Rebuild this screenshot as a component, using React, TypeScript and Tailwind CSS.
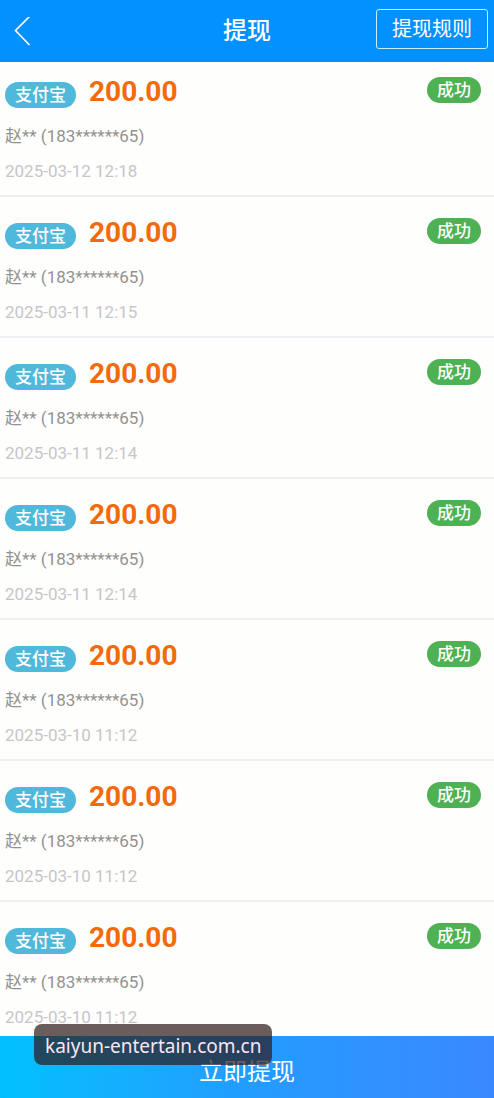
import { useState } from "react";

type Withdrawal = {
  id: number;
  channel: string;
  amount: string;
  account: string;
  time: string;
  status: string;
};

const account = "赵** (183******65)";

const withdrawals: Withdrawal[] = [
  "2025-03-12 12:18",
  "2025-03-11 12:15",
  "2025-03-11 12:14",
  "2025-03-11 12:14",
  "2025-03-10 11:12",
  "2025-03-10 11:12",
  "2025-03-10 11:12",
].map((time, id) => ({
  id,
  channel: "支付宝",
  amount: "200.00",
  account,
  time,
  status: "成功",
}));

function Header() {
  return (
    <header className="grid h-[62px] shrink-0 grid-cols-[1fr_auto_1fr] items-center bg-[#0391ff] px-1.5 pb-1 text-white">
      <button type="button" aria-label="返回" className="flex h-10 w-8 items-end justify-center">
        <svg viewBox="0 0 20 32" className="h-8 w-5" fill="none" stroke="currentColor" strokeWidth="1.6">
          <path d="M17.5 -.5 3.5 13.5l14 14.5" />
        </svg>
      </button>
      <h1 className="pt-1 text-2xl font-medium">提现</h1>
      <button
        type="button"
        className="h-10 justify-self-end rounded-[3px] border border-[#c4f1ff] px-[15px] text-[20px] leading-[38px]"
      >
        提现规则
      </button>
    </header>
  );
}

function WithdrawalRow({ item }: { item: Withdrawal }) {
  return (
    <li className="border-b-2 border-[#f0eef3] pt-5 pr-[13px] pb-3 pl-[5px] first:pt-3.5">
      <div className="flex items-start justify-between">
        <div className="flex items-baseline gap-[13px]">
          <span className="h-[26px] rounded-full bg-[#50b8da] px-2.5 text-[17px] leading-[26px] font-medium text-white">
            {item.channel}
          </span>
          <span className="text-[28px] leading-8 font-bold text-[#f26a0c]">{item.amount}</span>
        </div>
        <span className="mt-px h-[26px] rounded-full bg-[#4eb153] px-2.5 text-[17px] leading-[26px] font-medium text-white">
          {item.status}
        </span>
      </div>
      <p className="mt-4 text-[17px] leading-6 text-[#929292]">{item.account}</p>
      <time className="mt-[11px] block text-[17px] leading-6 text-[#c6c6ca]">{item.time}</time>
    </li>
  );
}

export default function App() {
  const [items] = useState(withdrawals);

  return (
    <div className="relative flex h-dvh flex-col bg-[#fefefc] font-[Roboto,'Noto_Sans_CJK_SC',sans-serif]">
      <Header />

      <main className="min-h-0 flex-1 overflow-y-auto [scrollbar-width:none]">
        <ul>
          {items.map((item) => (
            <WithdrawalRow key={item.id} item={item} />
          ))}
        </ul>
      </main>

      <button
        type="button"
        className="h-[62px] shrink-0 bg-linear-to-r from-[#00c0ff] via-[#229cff] to-[#3a88ff] pt-2.5 text-2xl text-white"
      >
        立即提现
      </button>

      {/* site label floats over the list and the footer */}
      <div className="absolute bottom-[33px] left-[34px] rounded-lg bg-[#2b1818]/70 px-[11px] pt-2 pb-1 font-['Noto_Sans',sans-serif] text-[19px] leading-[29px] text-[#fbe6f2]">
        kaiyun-entertain.com.cn
      </div>
    </div>
  );
}
